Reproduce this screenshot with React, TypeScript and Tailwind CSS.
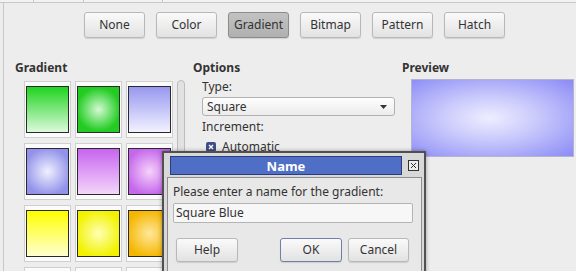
const tabs = ["None", "Color", "Gradient", "Bitmap", "Pattern", "Hatch"];

const tiles = [
  "bg-[linear-gradient(to_bottom,#1fd41f,#dcf9dc)]",
  "bg-[radial-gradient(circle_at_center,#d4f9d4,#22cc22_72%)]",
  "bg-[linear-gradient(to_bottom,#9797f0,#f2f2ff)]",
  "bg-[radial-gradient(circle_at_center,#f0f0ff,#9292ea_78%)]",
  "bg-[linear-gradient(to_bottom,#c764ef,#f3d6f9)]",
  "bg-[radial-gradient(circle_at_center,#f5d2fa,#c566ec_78%)]",
  "bg-[linear-gradient(to_bottom,#ffff00,#ffffd0)]",
  "bg-[radial-gradient(circle_at_center,#ffffb4,#f2f200_78%)]",
  "bg-[radial-gradient(circle_at_center,#ffe89c,#f5b600_78%)]",
  "bg-[linear-gradient(to_bottom,#ff8a00,#ffe0b0)]",
  "bg-[radial-gradient(circle_at_center,#ffe0b0,#ff8a00_75%)]",
  "bg-[linear-gradient(to_bottom,#ff4040,#ffd0d0)]",
];

const Tile = ({ fill }: { fill: string }) => (
  <div className="w-[47px] h-[57px] border border-[#cfcfcf] bg-[#fbfbfb] px-[1px] pt-[4px]">
    <div className={`h-[47px] border border-[#2a2a2a] ${fill}`} />
  </div>
);

const Button = ({ label, active, focus }: { label: string; active?: boolean; focus?: boolean }) => (
  <div
    className={`flex h-full w-full items-center justify-center rounded-[3px] border shadow-[0_1px_1px_rgba(0,0,0,0.12)] ${
      active
        ? "border-[#8c8c8c] bg-[linear-gradient(to_bottom,#c2c2c2,#b0b0b0)]"
        : focus
        ? "border-[#6f7fa6] bg-[linear-gradient(to_bottom,#fafafa,#e2e2e2)]"
        : "border-[#b8b8b8] bg-[linear-gradient(to_bottom,#fafafa,#e2e2e2)]"
    }`}
  >
    {label}
  </div>
);

export default function App() {
  return (
    <div className="relative w-[576px] h-[271px] overflow-hidden bg-[#ededed] text-[12px] leading-[16px] text-[#333] font-['Noto_Sans',sans-serif]">
      {/* tab strip */}
      <div className="flex h-[3px] border-b border-[#c8c8c8] bg-[#f2f2f2]">
        <div className="w-[34px] border-r border-[#c8c8c8]" />
        <div className="w-[50px] border-r border-[#c8c8c8]" />
        <div className="w-[79px] border-r border-[#c8c8c8]" />
      </div>

      <div className="ml-[3px] h-full border-l border-[#c8c8c8]">
        {/* fill type buttons */}
        <div className="flex gap-[11px] pt-[9px] pl-[80px]">
          {tabs.map((t) => (
            <div key={t} className="w-[61px] h-[26px]">
              <Button label={t} active={t === "Gradient"} />
            </div>
          ))}
        </div>

        <div className="flex mt-[22px]">
          {/* gradient list */}
          <div className="w-[189px] shrink-0">
            <div className="pl-[11px] font-bold">Gradient</div>
            <div className="flex mt-[5px] pl-[20px]">
              <div className="grid grid-cols-[47px_47px_47px] gap-x-[4px] gap-y-[5px]">
                {tiles.map((f, i) => (
                  <Tile key={i} fill={f} />
                ))}
              </div>
              <div className="ml-[4px] -mt-[1px] w-[8px] h-[200px] rounded-t-[4px] border border-[#bdbdbd] bg-[#e2e2e2]" />
            </div>
          </div>

          {/* options */}
          <div className="w-[209px] shrink-0">
            <div className="font-bold">Options</div>
            <div className="pl-[9px]">
              <div className="mt-[3px]">Type:</div>
              <div className="mt-[2px] flex h-[19px] w-[193px] items-center justify-between rounded-[3px] border border-[#b2b2b2] bg-[linear-gradient(to_bottom,#fdfdfd,#ececec)] pl-[4px] pr-[7px]">
                <span>Square</span>
                <svg width="7" height="4" viewBox="0 0 7 4">
                  <path d="M0 0h7L3.5 4z" fill="#333" />
                </svg>
              </div>
              <div className="mt-[3px]">Increment:</div>
              <div className="mt-[4px] flex items-center gap-[6px] pl-[4px]">
                <div className="flex h-[10px] w-[10px] items-center justify-center rounded-[2px] bg-[#3f4d8a]">
                  <svg width="6" height="6" viewBox="0 0 6 6">
                    <path d="M1 1l4 4M5 1L1 5" stroke="#fff" strokeWidth="1.3" />
                  </svg>
                </div>
                <span>Automatic</span>
              </div>
            </div>
          </div>

          {/* preview */}
          <div className="flex-1">
            <div className="font-bold">Preview</div>
            <div className="ml-[9px] mt-[3px] h-[78px] w-[163px] border border-[#b4b4d0] bg-[radial-gradient(ellipse_at_48%_50%,#eeeeff_0%,#cacafc_40%,#8a8af6_100%)]" />
          </div>
        </div>
      </div>

      {/* Name dialog */}
      <div className="absolute left-[162px] top-[151px] w-[264px] h-[140px] border-2 border-[#505050] bg-[#d8d8d8] shadow-[0_0_4px_rgba(0,0,0,0.35)]">
        <div className="mt-[3px] ml-[6px] flex items-center">
          <div className="flex h-[19px] w-[232px] items-center justify-center border border-[#2c3c78] bg-[#4f6ec6] text-[13px] font-bold text-white">
            Name
          </div>
          <div className="ml-[6px] flex h-[11px] w-[11px] items-center justify-center border border-[#333] bg-[#ececec]">
            <svg width="7" height="7" viewBox="0 0 7 7">
              <path d="M1 1l5 5M6 1L1 6" stroke="#333" strokeWidth="1" />
            </svg>
          </div>
        </div>
        <div className="mt-[2px] ml-[3px] mr-[2px] h-[120px] border border-[#8e8e8e] bg-[#e8e8e8] pl-[5px] pt-[6px]">
          <div>Please enter a name for the gradient:</div>
          <div className="mt-[3px] flex h-[20px] w-[240px] items-center rounded-[2px] border border-[#b4b4b4] bg-[#f7f7f7] pl-[2px]">
            Square Blue
          </div>
          <div className="mt-[15px] flex">
            <div className="ml-[3px] h-[24px] w-[62px]">
              <Button label="Help" />
            </div>
            <div className="ml-[42px] h-[24px] w-[62px]">
              <Button label="OK" focus />
            </div>
            <div className="ml-[6px] h-[24px] w-[61px]">
              <Button label="Cancel" />
            </div>
          </div>
        </div>
      </div>
    </div>
  );
}
